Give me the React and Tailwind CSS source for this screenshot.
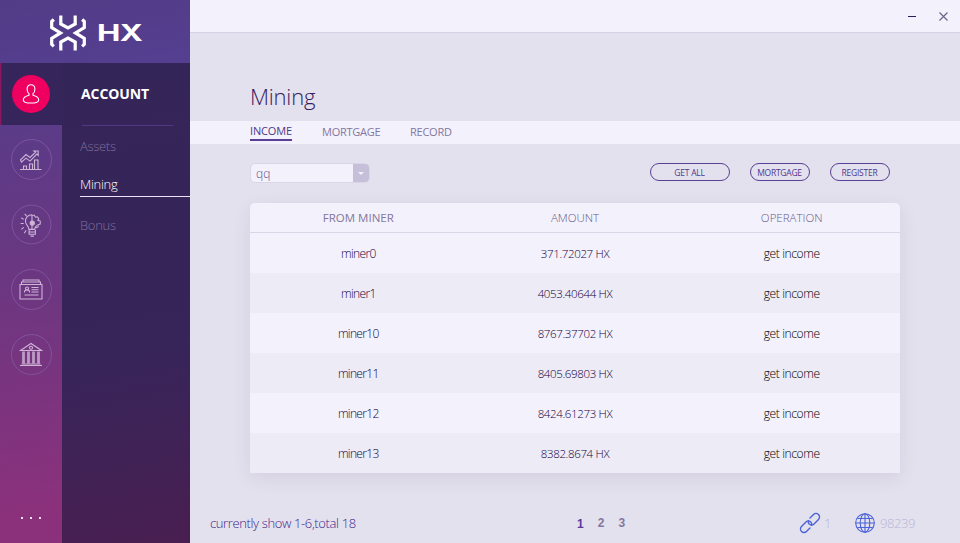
import React from 'react';

const rows = [
  ['miner0', '371.72027 HX'],
  ['miner1', '4053.40644 HX'],
  ['miner10', '8767.37702 HX'],
  ['miner11', '8405.69803 HX'],
  ['miner12', '8424.61273 HX'],
  ['miner13', '8382.8674 HX'],
];

function Logo() {
  return (
    <div className="flex h-[63px] shrink-0 items-center bg-[linear-gradient(170deg,#533c86,#543f91)] pl-[49px]">
      <svg width="38" height="36" viewBox="0 0 38 36" fill="none" stroke="#fff" strokeWidth="3.2" className="mt-[2px] shrink-0">
        <path d="M11.800 .5v8.500l7.200 4 7.200-4V.5M11.800 35.500V27l7.200-4 7.200 4v8.500" />
        <path d="M4.800 4.500L2.700 6.500v6l8.800 5.400-8.800 5.400v6l2.100 2M33.200 4.500l2.100 2v6l-8.800 5.400 8.800 5.400v6l-2.100 2" />
      </svg>
      <span className="mt-[4px] ml-[10px] origin-left scale-x-[1.36] font-['Inter'] text-[23px] leading-[23px] font-bold tracking-[-0.5px] text-white">HX</span>
    </div>
  );
}

function NavIcon({ children, className = '' }) {
  return (
    <div className="flex h-[65px] w-[62px] items-center justify-center">
      <div className={`flex size-[41px] items-center justify-center rounded-full border border-[#80539f] ${className}`}>
        <svg width="24" height="26" viewBox="0 0 24 26" fill="none" stroke="#cdb5d6" strokeWidth="1.1">{children}</svg>
      </div>
    </div>
  );
}

function Rail() {
  return (
    <nav className="flex w-[62px] shrink-0 flex-col bg-[linear-gradient(172deg,#583c89_8%,#6b3781_44%,#8b317c_92%)]">
      <div className="flex h-[62px] items-center justify-center bg-[linear-gradient(90deg,#a91360_0px,#35255a_2px)]">
        <div className="flex size-[38px] items-center justify-center rounded-full bg-[#ef0060]">
          <svg width="18" height="22" viewBox="0 0 18 22" fill="none" stroke="#fff" strokeWidth="1.100">
            <path d="M9 1.700c-2.500 0-3.900 1.700-3.900 4.200 0 1.900.6 3.700 1.900 4.700v1.700c-2.700.7-5.700 1.500-5.700 4.600 0 2.300 3.500 3.100 7.700 3.100s7.700-.8 7.700-3.100c0-3.100-3-3.900-5.700-4.600v-1.700c1.300-1 1.900-2.800 1.900-4.700 0-2.500-1.400-4.200-3.900-4.200z" />
          </svg>
        </div>
      </div>
      <div className="pt-[2px]">
        <NavIcon>
          <path d="M1 22.500h21.500M4.500 22v-3h3v3M10.500 22v-5h3v5M15.500 22v-9h3.500v9M1.500 12.800l5.500-5.300 4 3 5.500-5.300-1.500-1.200h4.200v4.300l-1.300-1.300-6.900 7.100-4-3-4.500 4z" />
        </NavIcon>
        <NavIcon className="scale-[0.97] border-[#936caf]">
          <path d="M12 2.500c-4.500 0-7 3.500-6.700 7 .2 3.500 3.500 4.500 3.500 8h6c0-2 1-3 2-4M12 2.500v15M12 3h2.500l1 2 2-.5 1.500 2-1 1.500 2.500 1v3l-2.500.8.500 2-2 1-1.500-.8M9 18v4.500h6.500V18M9 20.300h6.500M10.500 24.500h3.500" />
          <circle cx="12.300" cy="11" r="2.200" fill="#cdb5d6" />
          <path d="M0 11.500h3.500M1 5.500l2.500 1.700M4.500 1.500l2 2.500M1 17.500l2.500-2M4 21.500l2-3" />
        </NavIcon>
        <NavIcon>
          <path d="M1 7.500h22v14.500H1zM2.500 7V5h19v2M4 5V3h16v2M5.500 15.500v-1.500l1.500-1h2l1.500 1v1.500M12.500 10.500h7M12.500 12.700h7M12.500 15h7M5.500 18h14" />
          <circle cx="8" cy="11.500" r="1.500" />
        </NavIcon>
        <NavIcon>
          <path d="M1.500 8.500L12 1.500l10.500 7zM1 8.500h22M1 23.500h22M2.500 22h19" />
          <circle cx="12" cy="5.700" r="1.500" />
          <path d="M4.500 9.500v12M9.500 9.500v12M14.500 9.500v12M19.500 9.500v12" strokeWidth="2.800" strokeOpacity=".8" />
        </NavIcon>
      </div>
      <div className="mt-auto mb-[24px] flex justify-center gap-[7px]">
        <i className="size-[2px] bg-[#f4e7f4]" />
        <i className="size-[2px] bg-[#f4e7f4]" />
        <i className="size-[2px] bg-[#f4e7f4]" />
      </div>
    </nav>
  );
}

function AccountMenu() {
  return (
    <aside className="flex w-[128px] flex-col bg-[linear-gradient(170deg,#342558_0%,#372459_60%,#402256_80%,#491e50_100%)] pl-[18px] text-[13px] font-light tracking-[-0.3px]">
      <h2 className="mt-[21px] ml-px h-[20px] text-[14px] leading-[20px] font-bold tracking-[-0.1px] text-white">ACCOUNT</h2>
      <div className="mt-[21px] mr-[17px] ml-[2px] h-px shrink-0 bg-[#503884]" />
      <span className="mt-[10px] h-[20px] leading-[20px] text-[#806d9c]">Assets</span>
      <span className="mt-[18px] h-[23px] shrink-0 border-b border-[#eee2f8] leading-[21px] text-[#fff]">Mining</span>
      <span className="mt-[18px] leading-[21px] text-[#806d9c]">Bonus</span>
    </aside>
  );
}

function PillButton({ children, className }) {
  return (
    <button className={`h-[18px] rounded-full border border-[#5b3f94] pr-px text-[8.5px] leading-[18px] tracking-[-0.25px] text-[#50378c] ${className}`}>{children}</button>
  );
}

function Income() {
  return (
    <div className="mx-[60px] mt-[18px] flex h-[311px] flex-col">
      <div className="flex h-[22px] items-center justify-between pr-[10px]">
        <div className="flex h-[20px] w-[120px] overflow-hidden rounded-[5px] border border-[#d9d6e7] bg-[#f3f1fb]">
          <span className="flex-1 pl-[5px] text-[12px] leading-[19px] font-light text-[#5f4f8c]">qq</span>
          <span className="flex w-[16px] items-center justify-center bg-[#c5bfd9]">
            <svg width="6" height="3"><path d="M0 0h6L3 3z" fill="#f3f1fb" /></svg>
          </span>
        </div>
        <div className="-mt-[2px] flex gap-[20px]">
          <PillButton className="w-[80px]">GET ALL</PillButton>
          <PillButton className="w-[60px]">MORTGAGE</PillButton>
          <PillButton className="w-[60px]">REGISTER</PillButton>
        </div>
      </div>
      <div className="mt-[19px] h-[270px] rounded-t-[5px] bg-[#f3f1fb] shadow-[0_5px_18px_rgba(70,55,110,0.10)]">
        <div className="grid h-[30px] grid-cols-3 border-b border-[#dad6e8] text-center text-[11.5px] leading-[30px] font-light text-[#665988]">
          <span className="font-normal text-[#83779f]">FROM MINER</span>
          <span>AMOUNT</span>
          <span>OPERATION</span>
        </div>
        {rows.map(([name, amount]) => (
          <div key={name} className="grid h-[40px] grid-cols-3 text-center text-[12px] leading-[41px] even:bg-[#f3f1fb] odd:bg-[#edebf5]">
            <span className="font-light tracking-[-0.65px] text-[#12003f]">{name}</span>
            <span className="text-[11.5px] font-light tracking-[-0.35px] text-[#12003f]">{amount}</span>
            <span className="font-light tracking-[-0.38px] text-black">get income</span>
          </div>
        ))}
      </div>
    </div>
  );
}

function Footer() {
  return (
    <footer className="mt-auto flex h-[40px] items-center pl-[20px] font-light">
      <span className="mt-[2px] w-[367px] text-[13px] tracking-[-0.37px] text-[#40248b]">currently show 1-6,total 18</span>
      <div className="flex w-[222px] gap-[14px] font-['Liberation_Sans'] text-[12px] font-bold text-[#8278a0]">
        <span className="mt-px text-[#5a3a9c]">1</span>
        <span>2</span>
        <span>3</span>
      </div>
      <svg width="22" height="22" viewBox="0 0 22 22" fill="none" stroke="#4b63d8" strokeWidth="1.400" strokeLinecap="round">
        <g transform="rotate(-45 11 11)">
          <path d="M11.500 8.200A3.500 3.500 0 0 0 9.700 11.200a3.500 3.500 0 0 0 3.500 3.300h6.300a3.500 3.500 0 0 0 0-7h-5" />
          <path d="M10.500 13.800A3.500 3.500 0 0 0 12.300 10.800a3.500 3.500 0 0 0-3.500-3.300H2.500a3.500 3.500 0 0 0 0 7h5" />
        </g>
      </svg>
      <span className="mt-[2px] w-[34px] pl-[3px] text-[13px] text-[#b4b5d6]">1</span>
      <svg width="20" height="20" viewBox="0 0 20 20" fill="none" stroke="#4b63d8" strokeWidth="1.100">
        <circle cx="10" cy="10" r="9.300" />
        <ellipse cx="10" cy="10" rx="4.800" ry="9.300" />
        <path d="M10 .5v19M.5 10h19M2.500 5.500h15M2.500 14.500h15" />
      </svg>
      <span className="mt-[2px] pl-[5px] text-[13px] tracking-[-0.4px] text-[#b4b5d6]">98239</span>
    </footer>
  );
}

export default function App() {
  return (
    <div className="flex h-[543px] w-[960px] overflow-hidden bg-[#e4e1ee] font-['Open_Sans',sans-serif]">
      <div className="flex w-[190px] shrink-0 flex-col">
        <Logo />
        <div className="flex flex-1">
          <Rail />
          <AccountMenu />
        </div>
      </div>
      <main className="flex w-[770px] flex-col">
        <header className="flex h-[33px] shrink-0 items-center justify-end gap-[23px] border-b border-[#d6d2e6] bg-[#f3f1fb] pr-[12px]">
          <span className="h-px w-[8px] bg-[#2b1a60]" />
          <svg width="9" height="9" viewBox="0 0 9 9" stroke="#6d6587" strokeWidth="1.2"><path d="M.5.5l8 8M8.500.5l-8 8" /></svg>
        </header>
        <h1 className="mt-[47px] h-[32px] pl-[60px] text-[22px] leading-[32px] font-light tracking-[-0.2px] text-[#34205f]">Mining</h1>
        <div className="mt-[9px] flex h-[23px] shrink-0 gap-[30px] bg-[#f3f1fb] pl-[60px] text-[11px] leading-[22px] tracking-[-0.25px] text-[#83779f]">
          <span className="h-[20px] w-[42px] border-b-2 border-[#5b3f94] leading-[20px] tracking-[-0.15px] text-[#50378c]">INCOME</span>
          <span className="w-[58px]">MORTGAGE</span>
          <span>RECORD</span>
        </div>
        <Income />
        <Footer />
      </main>
    </div>
  );
}
